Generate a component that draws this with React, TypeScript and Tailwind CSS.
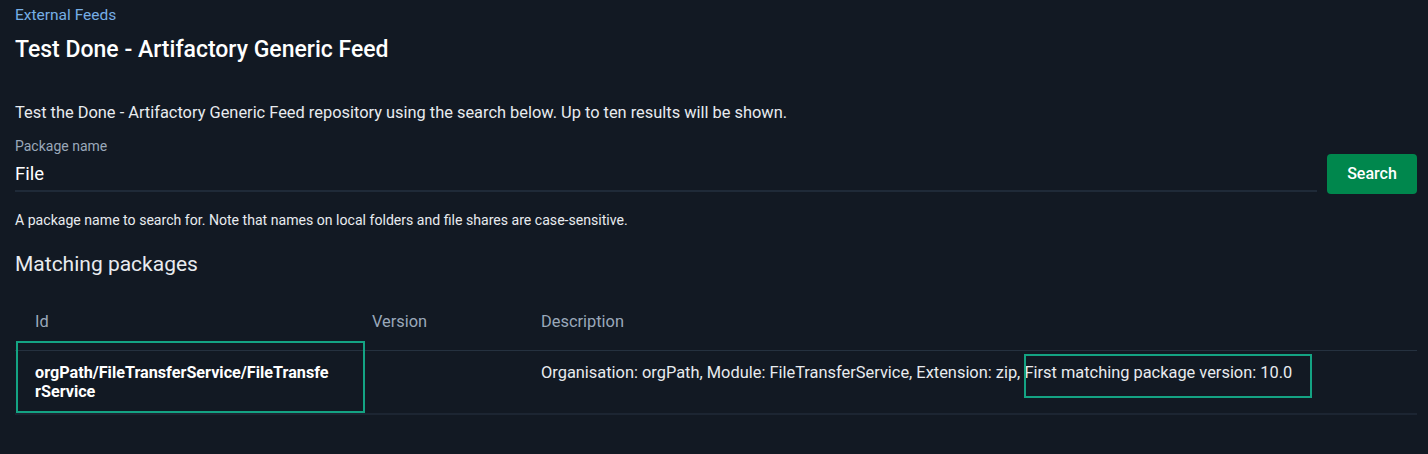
import { useState } from "react"

interface PackageRow {
  id: string
  version: string
  description: string
}

const packages: PackageRow[] = [
  {
    id: "orgPath/FileTransferService/FileTransferService",
    version: "",
    description:
      "Organisation: orgPath, Module: FileTransferService, Extension: zip, First matching package version: 10.0",
  },
]

export default function App() {
  const [query, setQuery] = useState("File")

  return (
    <div className="min-h-[454px] bg-[#121923] pl-[15px] pr-[11px] pt-[5px] font-['Roboto',sans-serif] text-[#e8ebef]">
      <a className="block text-[15.5px] leading-5 text-[#76aee6]">External Feeds</a>
      <h1 className="mt-[11px] text-[23px] font-medium leading-7 text-white">
        Test Done - Artifactory Generic Feed
      </h1>

      <p className="mt-[38px] text-[16.4px] leading-[22px]">
        Test the Done - Artifactory Generic Feed repository using the search below. Up to ten results will be shown.
      </p>

      <div className="mt-[14px] flex items-start gap-[10px]">
        <div className="flex-1">
          <label className="block text-[14px] leading-4 text-[#9aa8ba]">Package name</label>
          <input
            value={query}
            onChange={(e) => setQuery(e.target.value)}
            className="mt-[8px] block w-full border-b-2 border-[#1f2a38] bg-transparent pb-[4px] text-[18.5px] leading-6 text-white outline-none"
          />
        </div>
        <button className="mt-[16px] h-[40px] w-[90px] rounded-[4px] bg-[#00874d] text-[16px] font-medium text-white">
          Search
        </button>
      </div>

      <p className="mt-[18px] text-[14.1px] leading-4">
        A package name to search for. Note that names on local folders and file shares are case-sensitive.
      </p>

      <h2 className="mt-[23px] text-[21px] leading-[26px]">Matching packages</h2>

      <div className="relative mt-[34px]">
        <table className="w-full table-fixed border-collapse text-left text-[16.4px]">
          <colgroup>
            <col className="w-[337px]" />
            <col className="w-[169px]" />
            <col />
          </colgroup>
          <thead>
            <tr className="border-b border-[#25313f]">
              <th className="px-[20px] pb-[17px] font-normal leading-[22px] text-[#9aa8ba]">Id</th>
              <th className="px-[20px] pb-[17px] font-normal leading-[22px] text-[#9aa8ba]">Version</th>
              <th className="px-[20px] pb-[17px] font-normal leading-[22px] text-[#9aa8ba]">Description</th>
            </tr>
          </thead>
          <tbody>
            {packages.map((pkg) => (
              <tr key={pkg.id} className="border-b-2 border-[#1c2532]">
                <td className="break-all px-[20px] py-[12px] align-top text-[16.2px] font-bold leading-[19px] text-white">
                  {pkg.id}
                </td>
                <td className="px-[20px] py-[12px] align-top">{pkg.version}</td>
                <td className="px-[20px] py-[12px] align-top leading-[19px]">{pkg.description}</td>
              </tr>
            ))}
          </tbody>
        </table>

        {/* highlight boxes drawn over the table */}
        <div className="pointer-events-none absolute left-[1px] top-[30px] h-[72px] w-[349px] border-2 border-[#14a383]" />
        <div className="pointer-events-none absolute left-[1009px] top-[43px] h-[44px] w-[288px] border-2 border-[#14a383]" />
      </div>
    </div>
  )
}
